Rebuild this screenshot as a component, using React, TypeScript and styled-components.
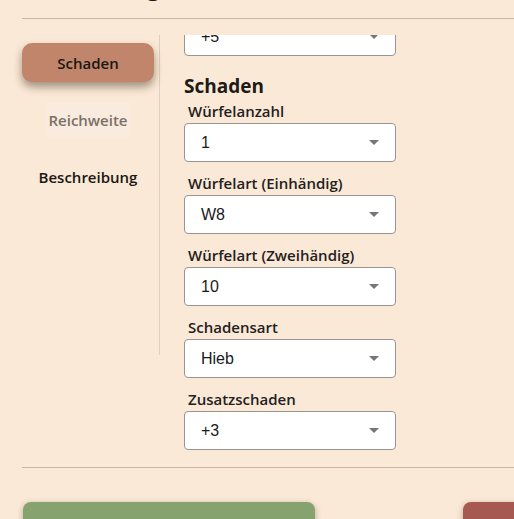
import React, { useLayoutEffect, useRef } from "react";
import styled, { createGlobalStyle } from "styled-components";

const GlobalStyle = createGlobalStyle`
  html, body {
    margin: 0;
    padding: 0;
    overflow: hidden;
    background: #fae9d6;
  }
  body {
    font-family: "Open Sans", "Noto Sans", sans-serif;
    color: #222;
  }
  * { box-sizing: border-box; }
`;

const Page = styled.div`
  width: 680px;
  padding-left: 22px;
`;

const Header = styled.header`
  height: 18px;
  overflow: hidden;
  display: flex;
  align-items: flex-end;
`;

const Title = styled.h2`
  margin: 0 0 20px 0;
  font-size: 24px;
  line-height: 24px;
  font-weight: 700;
  color: #1e1a17;
`;

const Divider = styled.div<{ $top?: number }>`
  height: 1px;
  margin-top: ${(p) => p.$top ?? 0}px;
  background: #c8b7a4;
`;

const MainRow = styled.div`
  margin-top: 16px;
  height: 420px;
  display: flex;
  align-items: flex-start;
`;

const Sidebar = styled.nav`
  width: 138px;
  height: 320px;
  flex: none;
  padding: 8px 5px 0 0;
  border-right: 1px solid #dfcfbd;
  display: flex;
  flex-direction: column;
  align-items: center;
  gap: 18px;
`;

const Tab = styled.button<{ $state: "active" | "disabled" | "normal" }>`
  width: ${(p) => (p.$state === "active" ? "132px" : "auto")};
  height: ${(p) => (p.$state === "active" ? "39px" : "36px")};
  margin: ${(p) => (p.$state === "active" ? "0" : "1.5px 0")};
  padding: 0 ${(p) => (p.$state === "active" ? "0" : "2px")};
  border: none;
  font-family: "Open Sans", "Noto Sans", sans-serif;
  font-size: 15px;
  font-weight: 600;
  color: ${(p) => (p.$state === "disabled" ? "#7b7168" : "#1b1714")};
  background: ${(p) =>
    p.$state === "active"
      ? "#c0856a"
      : p.$state === "disabled"
      ? "#f9ebdd"
      : "transparent"};
  border-radius: ${(p) => (p.$state === "active" ? "10px" : "0")};
  box-shadow: ${(p) =>
    p.$state === "active" ? "0 5px 8px rgba(60, 35, 20, 0.45)" : "none"};
  cursor: pointer;
`;

const ContentPane = styled.div`
  position: relative;
  flex: 1;
  height: 100%;
  overflow-y: auto;
  scrollbar-width: none;
  padding: 0 0 40px 24px;
  &::-webkit-scrollbar { display: none; }
`;

const Section = styled.section`
  display: flex;
  flex-direction: column;
  width: 212px;
`;

const SectionTitle = styled.h3`
  margin: 7px 0 3px 0;
  font-size: 19px;
  line-height: 24px;
  font-weight: 700;
  color: #1e1a17;
`;

const Field = styled.label`
  display: flex;
  flex-direction: column;
  margin-bottom: 11px;
`;

const LabelText = styled.span`
  padding-left: 4px;
  margin-bottom: 1px;
  font-size: 15px;
  line-height: 21px;
  font-weight: 600;
  color: #24201d;
`;

const SelectBox = styled.div`
  height: 39px;
  display: flex;
  align-items: center;
  justify-content: space-between;
  padding: 0 16px 0 16px;
  background: #fff;
  border: 1px solid #9a9590;
  border-radius: 4px;
  font-family: "Liberation Sans", Arial, sans-serif;
  font-size: 16px;
  color: #1a1a1a;
`;

const Caret = styled.svg`
  width: 10px;
  height: 5px;
  flex: none;
`;

const Footer = styled.div`
  margin-top: 34px;
  display: flex;
  gap: 148px;
`;

const ActionButton = styled.button<{ $tone: "save" | "cancel" }>`
  flex: none;
  width: ${(p) => (p.$tone === "save" ? "292px" : "200px")};
  height: 48px;
  margin-left: ${(p) => (p.$tone === "save" ? "1px" : "0")};
  border: none;
  border-radius: 8px;
  background: ${(p) => (p.$tone === "save" ? "#86a36f" : "#a65951")};
  box-shadow: 0 2px 6px rgba(60, 40, 20, 0.35);
  font-family: "Open Sans", "Noto Sans", sans-serif;
  font-size: 16px;
  font-weight: 700;
  color: #1b1714;
  padding-top: 10px;
`;

type FieldDef = { label: string; value: string };

const generalFields: FieldDef[] = [
  { label: "Waffentyp", value: "Nahkampf" },
  { label: "Kategorie", value: "Stangenwaffe" },
  { label: "Angriffsbonus", value: "+5" },
];

const damageFields: FieldDef[] = [
  { label: "Würfelanzahl", value: "1" },
  { label: "Würfelart (Einhändig)", value: "W8" },
  { label: "Würfelart (Zweihändig)", value: "10" },
  { label: "Schadensart", value: "Hieb" },
  { label: "Zusatzschaden", value: "+3" },
];

const SelectField: React.FC<FieldDef> = ({ label, value }) => (
  <Field>
    <LabelText>{label}</LabelText>
    <SelectBox>
      <span>{value}</span>
      <Caret viewBox="0 0 10 5">
        <path d="M0 0 L10 0 L5 5 Z" fill="#767676" />
      </Caret>
    </SelectBox>
  </Field>
);

export default function App() {
  const paneRef = useRef<HTMLDivElement>(null);
  const headingRef = useRef<HTMLHeadingElement>(null);

  useLayoutEffect(() => {
    const pane = paneRef.current;
    const heading = headingRef.current;
    if (pane && heading) {
      pane.scrollTop = heading.offsetTop - 39;
    }
  }, []);

  return (
    <>
      <GlobalStyle />
      <Page>
        <Header>
          <Title>Ausrüstung bearbeiten</Title>
        </Header>
        <Divider />
        <MainRow>
          <Sidebar>
            <Tab $state="active">Schaden</Tab>
            <Tab $state="disabled">Reichweite</Tab>
            <Tab $state="normal">Beschreibung</Tab>
          </Sidebar>
          <ContentPane ref={paneRef}>
            <Section>
              <SectionTitle>Allgemein</SectionTitle>
              {generalFields.map((f) => (
                <SelectField key={f.label} {...f} />
              ))}
            </Section>
            <Section>
              <SectionTitle ref={headingRef}>Schaden</SectionTitle>
              {damageFields.map((f) => (
                <SelectField key={f.label} {...f} />
              ))}
            </Section>
          </ContentPane>
        </MainRow>
        <Divider $top={12} />
        <Footer>
          <ActionButton $tone="save">Speichern</ActionButton>
          <ActionButton $tone="cancel">Abbrechen</ActionButton>
        </Footer>
      </Page>
    </>
  );
}
